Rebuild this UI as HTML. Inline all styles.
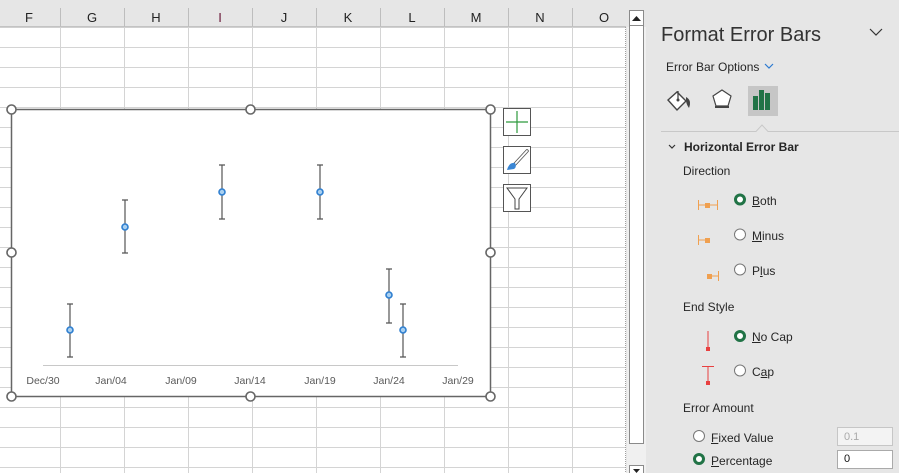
<!DOCTYPE html>
<html><head><meta charset="utf-8"><style>
body{margin:0;width:899px;height:473px;overflow:hidden;font-family:"Liberation Sans",sans-serif;background:#fff;position:relative}
.a{position:absolute}
.t{position:absolute;font-size:12px;color:#262626;white-space:nowrap}
u{text-decoration:underline}
</style></head><body>
<svg class="a" style="left:0;top:0" width="899" height="473">
<rect x="0" y="0" width="626" height="473" fill="#fff"/>
<rect x="0" y="0" width="626" height="27" fill="#e6e6e6"/>
<line x1="0" y1="27" x2="626" y2="27" stroke="#a0a0a0"/>
<g stroke="#d4d4d4" stroke-width="1">
<line x1="0" y1="47.5" x2="625" y2="47.5"/><line x1="0" y1="67.5" x2="625" y2="67.5"/><line x1="0" y1="87.5" x2="625" y2="87.5"/><line x1="0" y1="107.5" x2="625" y2="107.5"/>
<line x1="0" y1="127.5" x2="625" y2="127.5"/><line x1="0" y1="147.5" x2="625" y2="147.5"/><line x1="0" y1="167.5" x2="625" y2="167.5"/><line x1="0" y1="187.5" x2="625" y2="187.5"/>
<line x1="0" y1="207.5" x2="625" y2="207.5"/><line x1="0" y1="227.5" x2="625" y2="227.5"/><line x1="0" y1="247.5" x2="625" y2="247.5"/><line x1="0" y1="267.5" x2="625" y2="267.5"/>
<line x1="0" y1="287.5" x2="625" y2="287.5"/><line x1="0" y1="307.5" x2="625" y2="307.5"/><line x1="0" y1="327.5" x2="625" y2="327.5"/><line x1="0" y1="347.5" x2="625" y2="347.5"/>
<line x1="0" y1="367.5" x2="625" y2="367.5"/><line x1="0" y1="387.5" x2="625" y2="387.5"/><line x1="0" y1="407.5" x2="625" y2="407.5"/><line x1="0" y1="427.5" x2="625" y2="427.5"/>
<line x1="0" y1="447.5" x2="625" y2="447.5"/><line x1="0" y1="467.5" x2="625" y2="467.5"/>
<line x1="60.5" y1="27" x2="60.5" y2="473"/><line x1="124.5" y1="27" x2="124.5" y2="473"/><line x1="188.5" y1="27" x2="188.5" y2="473"/><line x1="252.5" y1="27" x2="252.5" y2="473"/>
<line x1="316.5" y1="27" x2="316.5" y2="473"/><line x1="380.5" y1="27" x2="380.5" y2="473"/><line x1="444.5" y1="27" x2="444.5" y2="473"/><line x1="508.5" y1="27" x2="508.5" y2="473"/><line x1="572.5" y1="27" x2="572.5" y2="473"/>
</g>
<g stroke="#bdbdbd"><line x1="60.5" y1="8" x2="60.5" y2="27"/><line x1="124.5" y1="8" x2="124.5" y2="27"/><line x1="188.5" y1="8" x2="188.5" y2="27"/><line x1="252.5" y1="8" x2="252.5" y2="27"/><line x1="316.5" y1="8" x2="316.5" y2="27"/><line x1="380.5" y1="8" x2="380.5" y2="27"/><line x1="444.5" y1="8" x2="444.5" y2="27"/><line x1="508.5" y1="8" x2="508.5" y2="27"/><line x1="572.5" y1="8" x2="572.5" y2="27"/></g>
<line x1="625.5" y1="27" x2="625.5" y2="473" stroke="#a0a0a0" stroke-dasharray="1 1"/>
<g font-size="13" fill="#222" text-anchor="middle" font-family="Liberation Sans">
<text x="29" y="22">F</text><text x="92" y="22">G</text><text x="156" y="22">H</text><text x="220" y="22" fill="#6b1a3a">I</text><text x="284" y="22">J</text><text x="348" y="22">K</text><text x="412" y="22">L</text><text x="476" y="22">M</text><text x="540" y="22">N</text><text x="604" y="22">O</text>
</g>
<rect x="626" y="0" width="21" height="473" fill="#e6e6e6"/>
<rect x="627" y="27" width="19" height="446" fill="#f0f0f0"/>
<rect x="629.5" y="10.5" width="14" height="15" fill="#fff" stroke="#8a8a8a"/>
<path d="M632 21 L636.5 16 L641 21Z" fill="#222"/>
<rect x="629.5" y="25.5" width="14" height="418" fill="#fff" stroke="#8a8a8a"/>
<rect x="629.5" y="465.5" width="14" height="10" fill="#fff" stroke="#8a8a8a"/>
<path d="M633 469 L640 469 L636.5 473Z" fill="#222"/>
<rect x="647" y="0" width="252" height="473" fill="#e6e6e6"/>
<rect x="11.5" y="109.5" width="479" height="287" fill="#fff" stroke="#666" stroke-width="1.5"/>
<line x1="43" y1="365.5" x2="458" y2="365.5" stroke="#c8c8c8"/>
<g stroke="#555" stroke-width="1.2">
<path d="M70 304V357M67 304H73M67 357H73"/>
<path d="M125 200V253M122 200H128M122 253H128"/>
<path d="M222 165V219M219 165H225M219 219H225"/>
<path d="M320 165V219M317 165H323M317 219H323"/>
<path d="M389 269V323M386 269H392M386 323H392"/>
<path d="M403 304V357M400 304H406M400 357H406"/>
</g>
<g fill="#a9d0f0" stroke="#2f7fd0" stroke-width="1.6">
<circle cx="70" cy="330" r="3"/><circle cx="125" cy="227" r="3"/><circle cx="222" cy="192" r="3"/><circle cx="320" cy="192" r="3"/><circle cx="389" cy="295" r="3"/><circle cx="403" cy="330" r="3"/>
</g>
<g font-size="10.5" fill="#595959" text-anchor="middle">
<text x="43" y="384">Dec/30</text><text x="111" y="384">Jan/04</text><text x="181" y="384">Jan/09</text><text x="250" y="384">Jan/14</text><text x="320" y="384">Jan/19</text><text x="389" y="384">Jan/24</text><text x="458" y="384">Jan/29</text>
</g>
<g fill="#fff" stroke="#666" stroke-width="1.6">
<circle cx="11.5" cy="109.5" r="4.5"/><circle cx="250.5" cy="109.5" r="4.5"/><circle cx="490.5" cy="109.5" r="4.5"/>
<circle cx="11.5" cy="252.5" r="4.5"/><circle cx="490.5" cy="252.5" r="4.5"/>
<circle cx="11.5" cy="396.5" r="4.5"/><circle cx="250.5" cy="396.5" r="4.5"/><circle cx="490.5" cy="396.5" r="4.5"/>
</g>
<g fill="#fff" stroke="#555"><rect x="503.5" y="108.5" width="27" height="27"/><rect x="503.5" y="146.5" width="27" height="27"/><rect x="503.5" y="184.5" width="27" height="27"/></g>
<path d="M517 111V133M506 122H528" stroke="#2e9a3e" stroke-width="1.2"/>
<path d="M527 151 L515 164" stroke="#555" stroke-width="3.5" stroke-linecap="round"/>
<path d="M527 151 L515 164" stroke="#fff" stroke-width="1.8" stroke-linecap="round"/>
<path d="M507 170 Q509 162 515 163 Q517 167 514 169Z" fill="#3a86d4"/>
<path d="M507 188H527L519 199V209H515V199Z" fill="#fff" stroke="#444"/>
<path d="M870 29 L876 35 L882 29" fill="none" stroke="#333" stroke-width="1.2"/>
<path d="M765 64 L769 68 L773 64" fill="none" stroke="#2b79d0" stroke-width="1.2"/>
<path d="M668 100 L677 92 L686 101 L677 110Z" fill="#fff" stroke="#444" stroke-width="1.4"/>
<path d="M678 91V99" stroke="#444" stroke-width="1.3"/><circle cx="678" cy="100" r="1.5" fill="#444"/>
<path d="M686 97 Q692 100 689 108 Q686 104 686 100Z" fill="#444"/>
<path d="M722 90 L731 96 L728 106 L716 106 L713 96Z" fill="#fff" stroke="#444" stroke-width="1.2"/>
<rect x="715" y="106" width="14" height="2" fill="#444"/>
<rect x="748" y="86" width="30" height="30" fill="#c6c6c6"/>
<rect x="753" y="96" width="5" height="14" fill="#217346"/><rect x="759" y="90" width="5" height="20" fill="#217346"/><rect x="765" y="93" width="5" height="17" fill="#217346"/>
<path d="M661 131.5 H756 L762 125 L768 131.5 H899" fill="none" stroke="#c8c8c8"/>
<path d="M669 145 L672 148 L675 145" fill="none" stroke="#333" stroke-width="1.2"/>
<g stroke="#f0a050" stroke-width="1" fill="none"><path d="M698 205H718M698.5 200V210M717.5 200V210"/><path d="M698 240H708M698.5 235V245"/><path d="M710 276H719M718.5 271V281"/></g>
<g fill="#f0a050"><rect x="705" y="203" width="5" height="5"/><rect x="705" y="238" width="5" height="5"/><rect x="707" y="274" width="5" height="5"/></g>
<g stroke="#e84040" stroke-width="1"><path d="M708 331V347"/><path d="M708 366V384M702 366.5H714"/></g>
<g fill="#e84040"><rect x="706" y="347" width="4" height="4"/><rect x="706" y="381" width="4" height="4"/></g>
<g fill="#fff" stroke="#777"><circle cx="740" cy="234.5" r="5.5"/><circle cx="740" cy="269.5" r="5.5"/><circle cx="740" cy="370.5" r="5.5"/><circle cx="699" cy="436" r="5.5"/></g>
<g fill="#fff" stroke="#217346" stroke-width="3"><circle cx="740" cy="199.5" r="4.5"/><circle cx="740" cy="336" r="4.5"/><circle cx="699" cy="459" r="4.5"/></g>
<rect x="837.5" y="427.5" width="55" height="18" fill="#f3f3f3" stroke="#c6c6c6"/>
<rect x="837.5" y="450.5" width="55" height="18" fill="#fff" stroke="#aaa"/>
</svg>
<div class="t" style="left:661px;top:24px;font-size:20px;color:#333">Format Error Bars</div>
<div class="t" style="left:666px;top:60px">Error Bar Options</div>
<div class="t" style="left:684px;top:140px;font-weight:bold">Horizontal Error Bar</div>
<div class="t" style="left:683px;top:164px">Direction</div>
<div class="t" style="left:752px;top:194px"><u>B</u>oth</div>
<div class="t" style="left:752px;top:229px"><u>M</u>inus</div>
<div class="t" style="left:752px;top:264px">P<u>l</u>us</div>
<div class="t" style="left:683px;top:300px">End Style</div>
<div class="t" style="left:752px;top:330px"><u>N</u>o Cap</div>
<div class="t" style="left:752px;top:365px">C<u>a</u>p</div>
<div class="t" style="left:683px;top:401px">Error Amount</div>
<div class="t" style="left:711px;top:431px"><u>F</u>ixed Value</div>
<div class="t" style="left:711px;top:454px"><u>P</u>ercentage</div>
<div class="t" style="left:844px;top:431px;font-size:11px;color:#aaa">0.1</div>
<div class="t" style="left:844px;top:453px;font-size:11px;color:#111">0</div>
</body></html>
